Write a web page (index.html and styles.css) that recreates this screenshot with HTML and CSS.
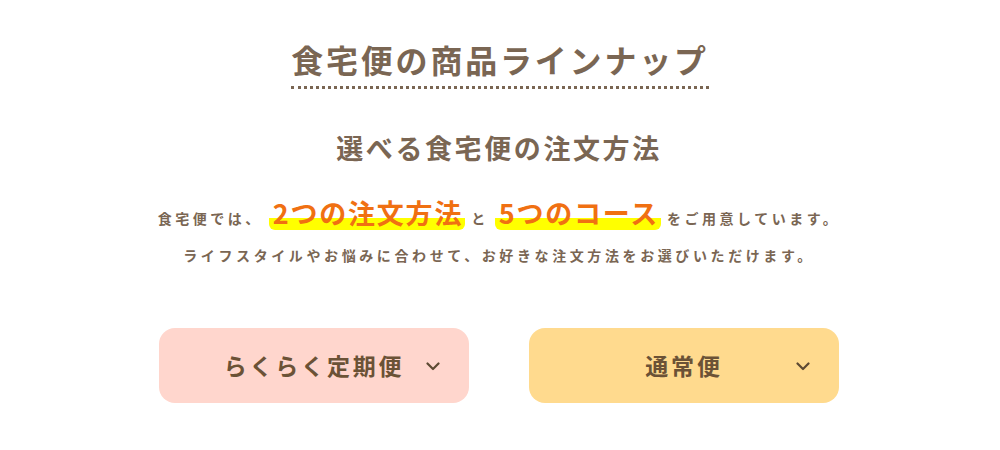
FILE: index.html
```html
<!DOCTYPE html>
<html lang="ja">
<head>
<meta charset="utf-8">
<title>食宅便の商品ラインナップ</title>
<link rel="stylesheet" href="styles.css">
</head>
<body>
<main class="lineup">
  <h2 class="lineup-title"><span class="lineup-title-text">食宅便の商品ラインナップ</span></h2>
  <h3 class="lineup-sub">選べる食宅便の注文方法</h3>
  <p class="lineup-lead">食宅便では、<span class="mark">2つの注文方法</span>と<span class="mark">5つのコース</span>をご用意しています。</p>
  <p class="lineup-text">ライフスタイルやお悩みに合わせて、お好きな注文方法をお選びいただけます。</p>
  <div class="tabs">
    <button class="tab tab-pink" type="button">らくらく定期便
      <svg class="chev" width="14" height="9" viewBox="0 0 14 9"><path d="M1.5 1.5 L7 7 L12.5 1.5" fill="none" stroke="currentColor" stroke-width="2.2" stroke-linecap="round" stroke-linejoin="round"/></svg>
    </button>
    <button class="tab tab-yellow" type="button">通常便
      <svg class="chev" width="14" height="9" viewBox="0 0 14 9"><path d="M1.5 1.5 L7 7 L12.5 1.5" fill="none" stroke="currentColor" stroke-width="2.2" stroke-linecap="round" stroke-linejoin="round"/></svg>
    </button>
  </div>
</main>
</body>
</html>
```
FILE: styles.css
```css
* { box-sizing: border-box; }
html, body { margin: 0; padding: 0; background: #fff; }
body {
  font-family: "Noto Sans CJK JP", "Noto Sans", sans-serif;
  color: #7a6653;
  width: 1000px;
  height: 450px;
  overflow: hidden;
}
.lineup {
  display: flex;
  flex-direction: column;
  align-items: center;
  padding-top: 37px;
  padding-right: 2px;
}
.lineup-title {
  margin: 0;
  font-size: 32px;
  font-weight: 700;
  line-height: 1.4;
  letter-spacing: 2.8px;
}
.lineup-title-text {
  display: inline-block;
  padding: 0 0 4px 0;
  margin-right: -2px;
  border-bottom: 3px dotted #7a6653;
}
.lineup-sub {
  margin: 40px 0 0;
  font-size: 27px;
  font-weight: 700;
  line-height: 1.4;
  letter-spacing: 2.6px;
}
.lineup-lead {
  margin: 30px 0 0;
  font-size: 14px;
  font-weight: 700;
  letter-spacing: 3.5px;
  line-height: 40px;
  display: flex;
  align-items: baseline;
}
.mark {
  font-size: 27px;
  color: #f07012;
  letter-spacing: 1.8px;
  padding: 0 2px 2px 4px;
  margin: 0 6px 0 6px;
  line-height: 1.15;
  border-radius: 6px;
  background: linear-gradient(transparent 63%, #ffff00 63%);
}
.lineup-text {
  margin: 6px 0 0;
  font-size: 14px;
  font-weight: 700;
  letter-spacing: 3.6px;
  line-height: 22px;
}
.tabs {
  display: flex;
  gap: 60px;
  margin-top: 62px;
}
.tab {
  position: relative;
  width: 310px;
  height: 75px;
  border: 0;
  border-radius: 16px;
  font-family: inherit;
  font-size: 23px;
  font-weight: 700;
  letter-spacing: 2.8px;
  color: #6b5236;
  display: flex;
  align-items: center;
  justify-content: center;
  padding: 0;
}
.tab-pink { background: #ffd6cd; }
.tab-yellow { background: #ffda8e; }
.chev {
  position: absolute;
  right: 29px;
  top: 34px;
  color: #5e4a33;
}
```
